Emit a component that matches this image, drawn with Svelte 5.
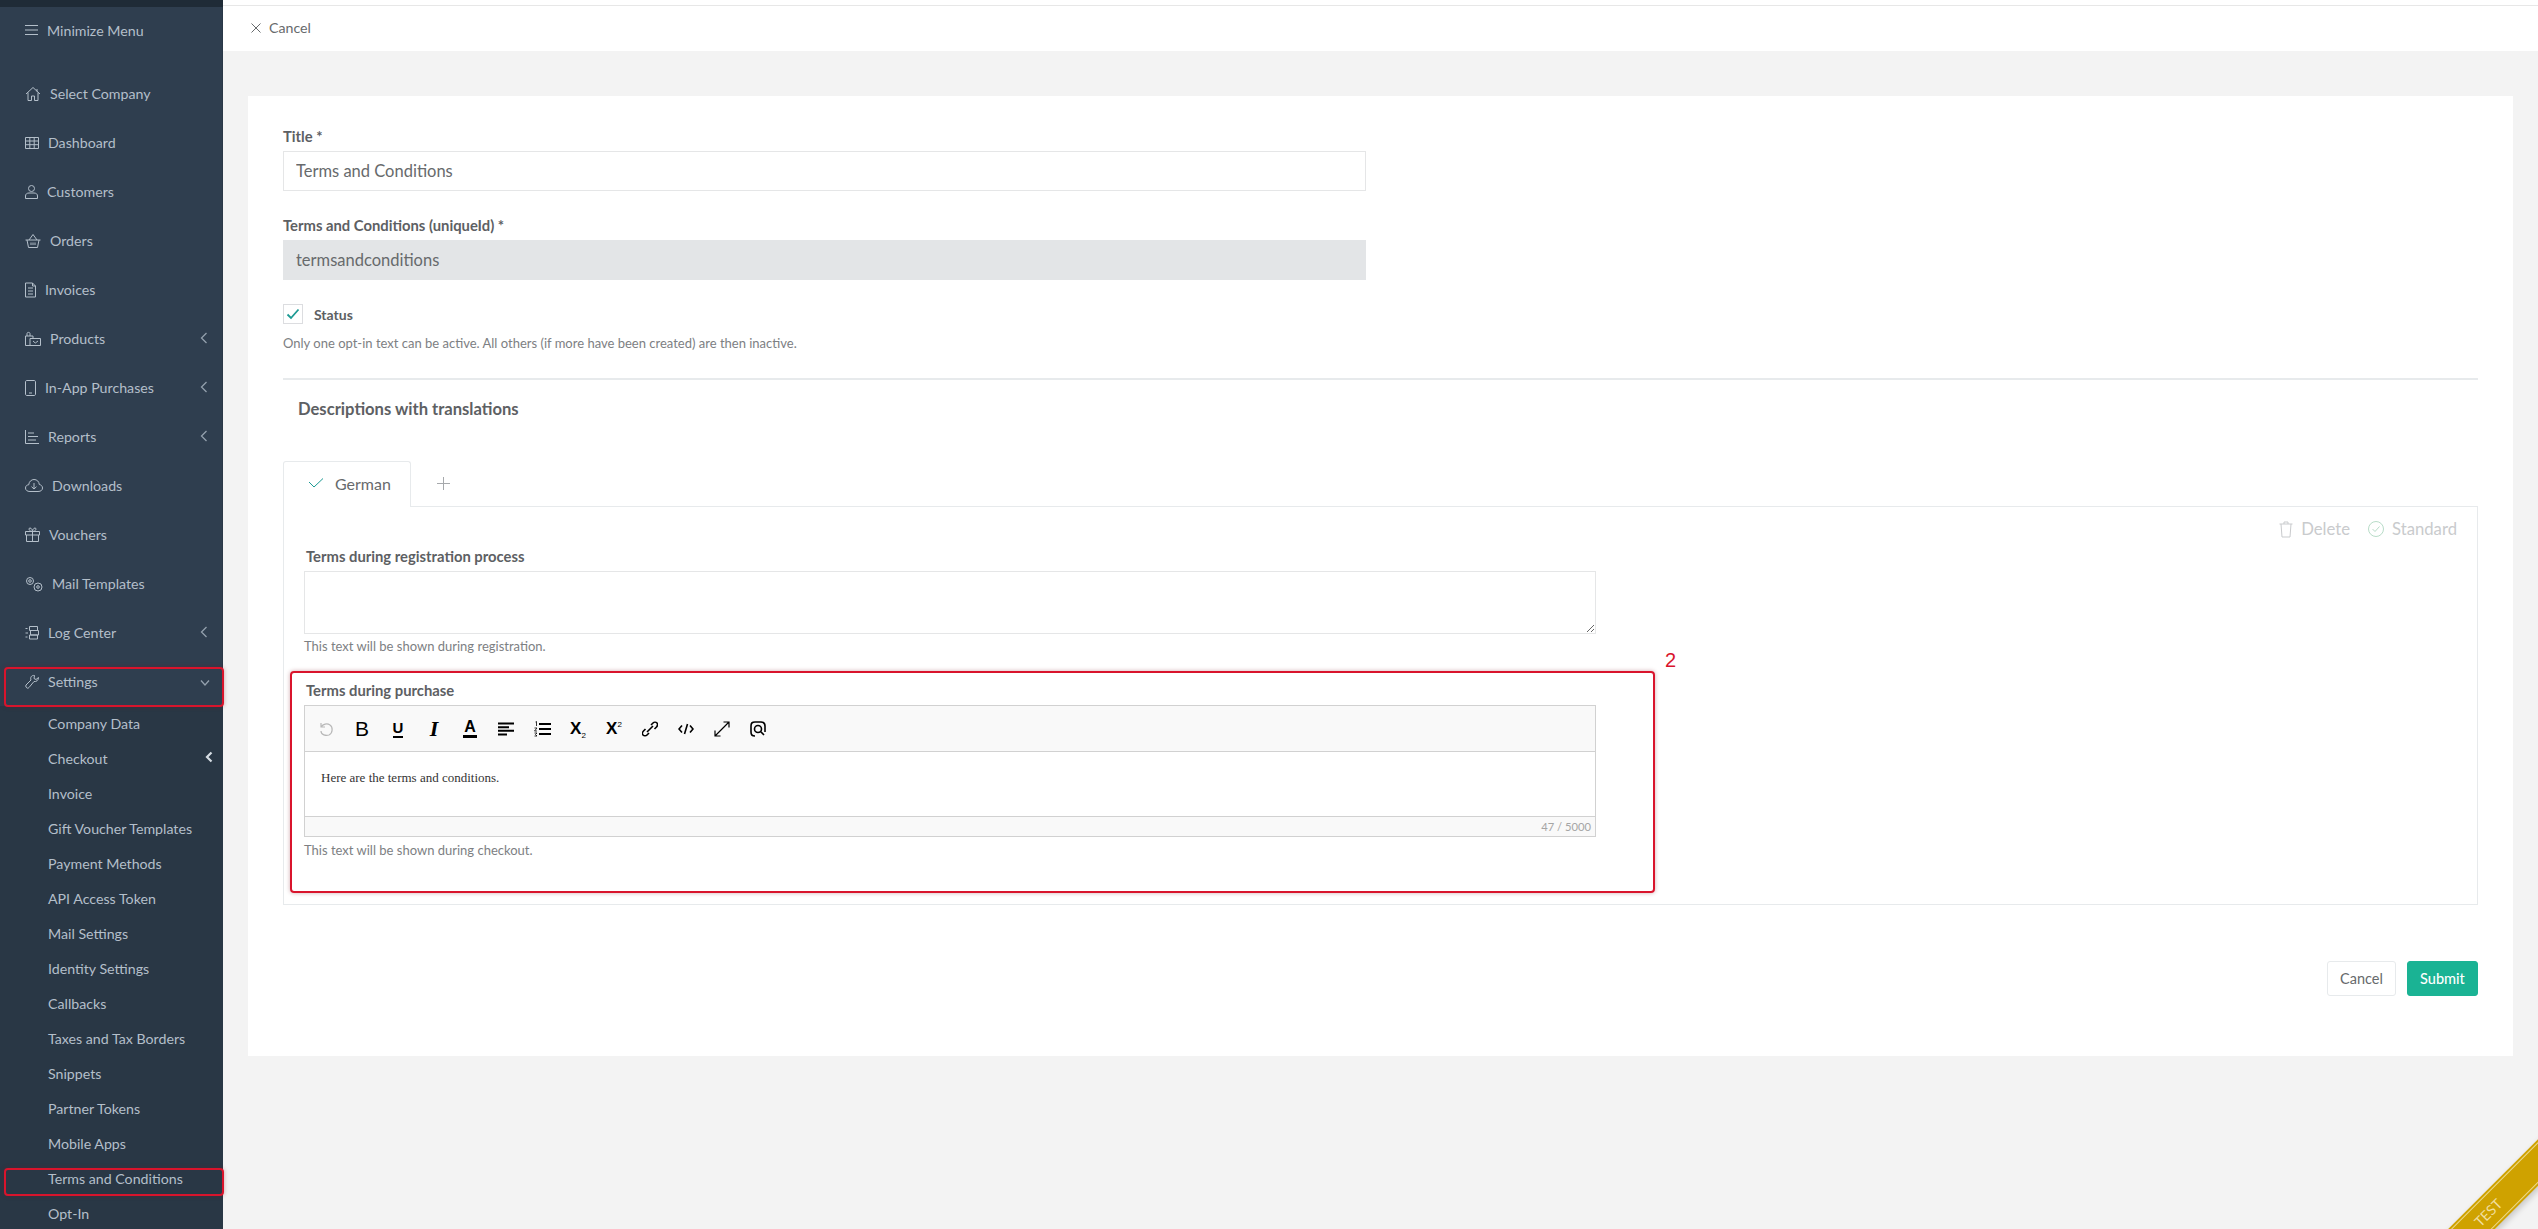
<script>
  const menu = [
    { label: 'Select Company', w: 16, d: 'M1 8L8 1.5L15 8M3 6.5V14.5H6.5V10H9.5V14.5H13V6.5M12 3V5.5' },
    { label: 'Dashboard', w: 14, d: 'M.5 2.5H13.5V13.5H.5ZM.5 6H13.5M.5 9.7H13.5M4.8 2.5V13.5M9.2 2.5V13.5' },
    { label: 'Customers', w: 13, d: 'M6.5 1.5A3 3 0 1 1 6.5 7.5A3 3 0 1 1 6.5 1.5ZM.5 14.5V12C.5 10 2 9 4 9H9C11 9 12.5 10 12.5 12V14.5Z' },
    { label: 'Orders', w: 16, d: 'M.5 7H15.5M2 7L3.5 14.5H12.5L14 7M4 7L8 1.5L12 7M6 9.5V12M8 9.5V12M10 9.5V12' },
    { label: 'Invoices', w: 11, d: 'M.5 1H7.5L10.5 4V15H.5ZM7.5 1V4H10.5M3 6H8M3 9H8M3 12H8' },
    { label: 'Products', w: 16, arrow: true, d: 'M.5 5H8V7M5 5V2.5C5 1 2 1 2 2.5V5M.5 5V14.5H5M5 7.5H15.5V14.5H5ZM8 10L10.3 12L13 10' },
    { label: 'In-App Purchases', w: 11, arrow: true, d: 'M2 .5H9C10 .5 10.5 1 10.5 2V14C10.5 15 10 15.5 9 15.5H2C1 15.5 .5 15 .5 14V2C.5 1 1 .5 2 .5ZM4 13H7' },
    { label: 'Reports', w: 14, arrow: true, d: 'M.5 1V14.5H14M3 4H9M3 7.5H13M3 11H11' },
    { label: 'Downloads', w: 18, d: 'M5 13.5C2 13.5.5 12 .5 10C.5 8 2 6.8 3.7 6.8C4 3.5 6.5 1.5 9 1.5C12 1.5 14 3.5 14.3 6.5C16 6.8 17.5 8 17.5 10C17.5 12 16 13.5 13 13.5ZM9 5V11M6.5 8.7L9 11L11.5 8.7' },
    { label: 'Vouchers', w: 15, d: 'M.5 4.5H14.5V8H.5ZM1.5 8V14.5H13.5V8M7.5 4.5V14.5M7.5 4.5C4 4.5 3 1 5 1C6.5 1 7.5 3 7.5 4.5C7.5 3 8.5 1 10 1C12 1 11 4.5 7.5 4.5Z' },
    { label: 'Mail Templates', w: 18, d: 'M5 1.5A3.5 3.5 0 1 1 5 8.5A3.5 3.5 0 1 1 5 1.5ZM5 3.7A1.3 1.3 0 1 1 5 6.3A1.3 1.3 0 1 1 5 3.7ZM13 7A4 4 0 1 1 13 15A4 4 0 1 1 13 7ZM13 9.7A1.3 1.3 0 1 1 13 12.3A1.3 1.3 0 1 1 13 9.7Z' },
    { label: 'Log Center', w: 14, arrow: true, d: 'M4.5 1.5H12.5V5.5H4.5ZM5.5 5.5H13.5V10H5.5ZM4.5 10H12.5V14H4.5ZM.5 3.5H2.5M.5 8H3M.5 12H2.5' },
    { label: 'Settings', w: 14, down: true, d: 'M1 13C2 14.5 3 14.5 4 13.5L9 7.5C11 8 13.5 6.5 13.5 3.5L11 5.5L9 4.5L9.5 1.5C6.5 1 5 3.5 6 6L1 11C.7 11.7.7 12.3 1 13Z' }
  ];
  const sub = ['Company Data', 'Checkout', 'Invoice', 'Gift Voucher Templates', 'Payment Methods', 'API Access Token', 'Mail Settings', 'Identity Settings', 'Callbacks', 'Taxes and Tax Borders', 'Snippets', 'Partner Tokens', 'Mobile Apps', 'Terms and Conditions', 'Opt-In'];
</script>

<div class="app">
  <aside class="side">
    <div class="strip"></div>
    <div class="min">
      <svg class="ic" width="13" height="16" viewBox="0 0 13 16"><path d="M0 3.5H13M0 8H13M0 12.5H13" /></svg>
      <span>Minimize Menu</span>
    </div>
    <nav class="nav">
      {#each menu as m}
        <div class="item">
          <svg class="ic" width={m.w} height="16" viewBox="0 0 {m.w} 16"><path d={m.d} /></svg>
          <span>{m.label}</span>
          {#if m.arrow}
            <svg class="chev" width="8" height="12" viewBox="0 0 8 12"><path d="M6.5 1L1.5 6L6.5 11" /></svg>
          {/if}
          {#if m.down}
            <svg class="chev down" width="10" height="8" viewBox="0 0 10 8"><path d="M1 1.5L5 6L9 1.5" /></svg>
          {/if}
        </div>
      {/each}
    </nav>
    <div class="sub">
      {#each sub as s}
        <div class="subitem">
          <span>{s}</span>
          {#if s === 'Checkout'}
            <svg class="bold" width="8" height="12" viewBox="0 0 8 12"><path d="M6.5 1.5L2 6L6.5 10.5" /></svg>
          {/if}
        </div>
      {/each}
    </div>
  </aside>

  <main class="main">
    <header class="top">
      <svg class="x" width="10" height="10" viewBox="0 0 10 10"><path d="M.5 .5L9.5 9.5M9.5 .5L.5 9.5" /></svg>
      <span>Cancel</span>
    </header>

    <section class="card">
      <label class="lab" for="t">Title *</label>
      <input id="t" class="inp" value="Terms and Conditions" readonly />

      <label class="lab gap" for="u">Terms and Conditions (uniqueId) *</label>
      <input id="u" class="inp dis" value="termsandconditions" disabled />

      <div class="status">
        <span class="box">
          <svg width="14" height="12" viewBox="0 0 14 12"><path d="M1.5 6.5L5 10L12.5 1.5" /></svg>
        </span>
        <b>Status</b>
      </div>
      <p class="hint first">Only one opt-in text can be active. All others (if more have been created) are then inactive.</p>

      <hr />
      <h3>Descriptions with translations</h3>

      <div class="tabs">
        <div class="tab">
          <svg width="16" height="12" viewBox="0 0 16 12"><path d="M1 5L6 10L15 1.5" /></svg>
          <span>German</span>
        </div>
        <svg class="plus" width="13" height="13" viewBox="0 0 13 13"><path d="M6.5 0V13M0 6.500H13" /></svg>
      </div>

      <div class="panel">
        <div class="actions">
          <svg class="muted" width="14" height="17" viewBox="0 0 14 17"><path d="M.5 3H13.500M5 3V1H9V3M2 3L3 16H11L12 3" /></svg>
          <span>Delete</span>
          <svg class="muted green" width="16" height="16" viewBox="0 0 16 16"><path d="M8 .5A7.500 7.500 0 1 1 8 15.500A7.500 7.500 0 1 1 8 .5ZM4.500 8L7 10.500L11.500 5.500" /></svg>
          <span>Standard</span>
        </div>

        <label class="lab inner" for="r">Terms during registration process</label>
        <textarea id="r" class="ta"></textarea>
        <p class="hint">This text will be shown during registration.</p>

        <div class="purchase">
          <div class="lab inner">Terms during purchase</div>
          <div class="editor">
            <div class="tools">
              <svg class="t undo" width="16" height="16" viewBox="0 0 16 16"><path d="M3 10C3 14 8 15 11 14C15 12 15 6 12 4C9 2 5 3 3 6M3 2V6H7" /></svg>
              <span class="t b">B</span>
              <span class="t u">U</span>
              <span class="t i">I</span>
              <span class="t a">A</span>
              <svg class="t" width="16" height="16" viewBox="0 0 16 16"><path class="thick" d="M0 2.500H16M0 6.200H11M0 9.800H16M0 13.500H9" /></svg>
              <svg class="t" width="17" height="16" viewBox="0 0 17 16"><path class="thick" d="M5 3H17M5 8H17M5 13H17" /><path class="thin" d="M1.500 1L2.500 .5V5M.5 7H3L.5 10H3M.5 12H3L1.500 13.500L3 15H.5" /></svg>
              <span class="t xs">X<sub>2</sub></span>
              <span class="t xs">X<sup>2</sup></span>
              <svg class="t" width="16" height="16" viewBox="0 0 16 16"><path class="link" d="M9 4L11 2C12 1 14 1 15 2C16 3 15.500 5 14.500 6L12.500 8M7 12L5 14C4 15 2 15 1 14C0 13 .5 11 1.500 10L3.500 8M5 11L11 5" /></svg>
              <svg class="t" width="16" height="12" viewBox="0 0 16 12"><path class="link" d="M4 2.500L1 6L4 9.500M12 2.500L15 6L12 9.500M9.500 1L6.500 11" /></svg>
              <svg class="t" width="16" height="16" viewBox="0 0 16 16"><path class="fine" d="M1 15L15 1M9.500 1H15V6.500M1 9.500V15H6.500" /></svg>
              <svg class="t" width="16" height="16" viewBox="0 0 16 16"><path class="link" d="M5 15C2 15 1 14 1 11V5C1 2 2 1 5 1H11C14 1 15 2 15 5V11M8 4.500A3.500 3.500 0 1 1 8 11.500A3.500 3.500 0 1 1 8 4.500ZM10.500 10.500L14 14" /></svg>
            </div>
            <div class="content">Here are the terms and conditions.</div>
            <div class="count">47 / 5000</div>
          </div>
          <p class="hint">This text will be shown during checkout.</p>
        </div>
      </div>

      <div class="buttons">
        <button class="btn">Cancel</button>
        <button class="btn primary">Submit</button>
      </div>
    </section>
  </main>

  <!-- annotations lying over the page -->
  <div class="mark m-settings"></div>
  <div class="mark m-terms"></div>
  <div class="mark m-box"></div>
  <div class="num">2</div>

  <div class="ribbon"><span>TEST</span></div>
</div>

<style>
  :global(body) { margin: 0; }
  .app {
    position: relative;
    display: flex;
    width: 2538px;
    height: 1229px;
    overflow: hidden;
    font-family: Lato, "Noto Sans", sans-serif;
    font-size: 14.2px;
    color: #676a6c;
    background: #f3f3f3;
  }
  .side {
    width: 223px;
    flex: none;
    background: #2f3e4f;
    color: #b4bfca;
    box-shadow: inset -1px 0 0 #2a3847;
  }
  .strip { height: 7px; background: #1f2b37; }
  .min, .item {
    display: flex;
    align-items: center;
    padding-left: 25px;
    gap: 9px;
    position: relative;
  }
  .min { height: 46px; }
  .nav { padding-top: 16px; }
  .item { height: 49px; }
  .ic { fill: none; stroke: #b4bfca; stroke-width: 1; flex: none; }
  .chev { position: absolute; left: 200px; top: 18px; fill: none; stroke: #93a0ad; stroke-width: 1.3; }
  .chev.down { top: 22px; }
  .sub { background: #293745; height: 560px; }
  .subitem {
    position: relative;
    height: 35px;
    line-height: 35px;
    padding-left: 48px;
  }
  .bold { position: absolute; left: 205px; top: 10px; fill: none; stroke: #d5dce3; stroke-width: 2.2; }

  .main { flex: 1; min-width: 0; }
  .top {
    height: 46px;
    margin-top: 5px;
    border-top: 1px solid #e7e7e7;
    box-shadow: 0 -5px 0 #fff;
    background: #fff;
    display: flex;
    align-items: center;
    gap: 8px;
    padding: 0 0 2px 28px;
    box-sizing: border-box;
  }
  .x { fill: none; stroke: #676a6c; stroke-width: 1; }
  .card {
    margin: 45px 25px 0;
    padding: 30px 35px 60px;
    background: #fff;
    height: 960px;
    box-sizing: border-box;
  }
  .lab {
    display: block;
    height: 20px;
    line-height: 20px;
    margin-bottom: 5px;
    font-weight: 700;
    font-size: 14.8px;
    color: #5d6063;
  }
  .lab.gap { margin-top: 24px; }
  .lab.inner { margin-left: 2px; }
  .inp {
    display: block;
    width: 1083px;
    height: 40px;
    box-sizing: border-box;
    border: 1px solid #e5e6e7;
    background: #fff;
    padding: 0 12px;
    font: inherit;
    font-size: 16.5px;
    color: #676a6c;
    outline: 0;
  }
  .dis { background: #e3e5e7; border-color: #e3e5e7; opacity: 1; }
  .status { display: flex; align-items: center; gap: 11px; margin-top: 24px; height: 20px; font-size: 14px; color: #5d6063; }
  .box {
    width: 20px;
    height: 20px;
    box-sizing: border-box;
    border: 1px solid #dcdde0;
    display: flex;
    align-items: center;
    justify-content: center;
  }
  .box svg { fill: none; stroke: #1c9a93; stroke-width: 1.8; }
  .hint { margin: 3px 0 0; height: 18px; line-height: 18px; font-size: 13px; color: #7d8083; }
  .hint.first { margin-top: 10px; }
  hr { margin: 26px 0 0; border: 0; border-top: 2px solid #e7eaec; }
  h3 {
    margin: 17px 0 0 15px;
    height: 24px;
    line-height: 24px;
    font-size: 16.6px;
    font-weight: 700;
    color: #5d6063;
  }
  .tabs { display: flex; align-items: center; margin-top: 40px; height: 45px; }
  .tab {
    width: 128px;
    height: 46px;
    box-sizing: border-box;
    border: 1px solid #e7eaec;
    border-bottom: 0;
    border-radius: 3px 3px 0 0;
    background: #fff;
    display: flex;
    align-items: center;
    gap: 11px;
    padding: 0 0 2px 24px;
    font-size: 16px;
    position: relative;
    z-index: 1;
  }
  .tab svg { fill: none; stroke: #1c9a93; stroke-width: 1; }
  .plus { margin-left: 26px; fill: none; stroke: #a6a9ac; stroke-width: 1; }
  .panel {
    height: 399px;
    box-sizing: border-box;
    border: 1px solid #e7eaec;
    padding: 12px 20px 0 20px;
  }
  .actions {
    display: flex;
    justify-content: flex-end;
    align-items: center;
    gap: 8px;
    height: 20px;
    margin-bottom: 7px;
    color: #c9cbcd;
    font-size: 16.7px;
  }
  .actions span:first-of-type { margin-right: 10px; }
  .muted { fill: none; stroke: #c9cbcd; stroke-width: 1; }
  .green { stroke: #b8dcc8; }
  .ta {
    display: block;
    width: 1292px;
    height: 63px;
    box-sizing: border-box;
    border: 1px solid #e5e6e7;
    margin: 0;
    resize: vertical;
    outline: 0;
  }
  .purchase { margin-top: 25px; }
  .purchase .hint { margin-top: 4px; }
  .editor { width: 1292px; height: 132px; box-sizing: border-box; border: 1px solid #d1d1d1; margin-top: 2px; }
  .tools {
    height: 46px;
    box-sizing: border-box;
    background: #f9f9f9;
    border-bottom: 1px solid #d1d1d1;
    display: grid;
    grid-template-columns: repeat(13, 36px);
    align-items: center;
    justify-items: center;
    padding-left: 3px;
  }
  .t { color: #000; font-family: "Liberation Sans", sans-serif; line-height: 1; fill: none; stroke: #000; }
  .undo { stroke: #b8b8b8; stroke-width: 1.2; }
  .b { font-size: 21px; }
  .u { font-weight: 700; font-size: 15px; border-bottom: 2px solid #000; padding-bottom: 1px; }
  .i { font: italic 700 22px "Liberation Serif", serif; }
  .a { font-weight: 700; font-size: 16px; border-bottom: 3px solid #000; padding: 0 1px; }
  .xs { font-weight: 700; font-size: 17px; }
  sub, sup { font-size: 8px; font-weight: 400; line-height: 0; }
  .thick { stroke-width: 2; }
  .thin { stroke-width: .8; }
  .link { stroke-width: 1.6; }
  .fine { stroke-width: 1.2; }
  .content {
    height: 65px;
    padding: 18px 0 0 16px;
    box-sizing: border-box;
    border-bottom: 1px solid #d1d1d1;
    font: 13px "Liberation Serif", serif;
    color: #333;
  }
  .count {
    height: 19px;
    line-height: 19px;
    background: #f9f9f9;
    text-align: right;
    padding-right: 4px;
    font-size: 11.2px;
    color: #a5a5a5;
  }
  .buttons { display: flex; justify-content: flex-end; gap: 11px; margin-top: 56px; }
  .btn {
    height: 35px;
    width: 69px;
    box-sizing: border-box;
    border: 1px solid #e7eaec;
    border-radius: 3px;
    background: #fff;
    font: inherit;
    font-size: 14.5px;
    color: #676a6c;
    padding: 0;
  }
  .primary { width: 71px; background: #1ab394; border-color: #1ab394; color: #fff; font-weight: 500; }

  .mark {
    position: absolute;
    box-sizing: border-box;
    border: 2px solid #d9142c;
    border-radius: 4px;
    box-shadow: 0 0 4px rgba(120, 20, 30, .35);
  }
  .m-settings { left: 4px; top: 667px; width: 220px; height: 40px; }
  .m-terms { left: 4px; top: 1168px; width: 220px; height: 28px; }
  .m-box { left: 290px; top: 671px; width: 1365px; height: 222px; }
  .num { position: absolute; left: 1665px; top: 649px; font: 400 20px "Liberation Sans", sans-serif; color: #d9142c; }

  .ribbon {
    position: absolute;
    left: 2368px;
    top: 1195.5px;
    width: 240px;
    height: 33px;
    box-sizing: border-box;
    transform: rotate(-45deg);
    background: #cfa200;
    outline: 1px solid #ecd98a;
    outline-offset: -3px;
    box-shadow: 0 3px 6px rgba(0, 0, 0, .18);
    text-align: center;
    line-height: 33px;
    font-size: 14px;
    color: #f1dfa0;
  }
</style>
